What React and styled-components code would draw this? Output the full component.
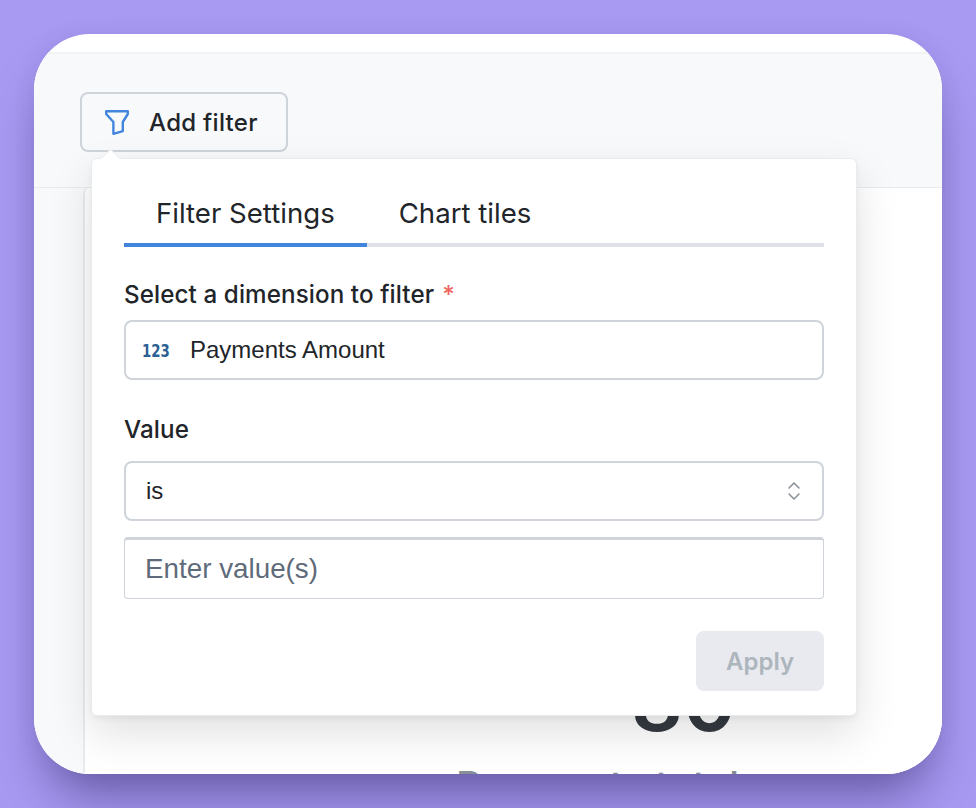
import styled, { createGlobalStyle } from 'styled-components'
import { ChevronsUpDown } from 'lucide-react'

const colors = {
  blue: '#4285dc',
  text: '#212529',
  border: '#ced4da',
  hairline: '#e9ecef',
  wash: '#f8f9fa',
  muted: '#5f6b7a',
}

const GlobalStyle = createGlobalStyle`
  html, body {
    margin: 0;
    height: 100%;
  }
  body {
    font-family: Inter, "Liberation Sans", sans-serif;
    color: ${colors.text};
  }
`

/* -------------------------------------------------------------------------- */

const Page = styled.div`
  box-sizing: border-box;
  width: 976px;
  height: 808px;
  padding: 34px;
  overflow: hidden;
  background: #a899f2;
`

const Window = styled.div`
  position: relative;
  width: 908px;
  height: 740px;
  border-radius: 56px;
  background: #fff;
  box-shadow: 0 34px 50px -14px rgba(40, 30, 90, 0.5), 0 0 24px rgba(40, 30, 90, 0.06);
`

const WindowClip = styled.div`
  display: flex;
  flex-direction: column;
  height: 100%;
  border-radius: 56px;
  overflow: hidden;
`

const Toolbar = styled.div`
  margin-top: 18px;
  height: 136px;
  flex: none;
  box-sizing: border-box;
  padding: 38px 0 0 46px;
  background: ${colors.wash};
  border-top: 2px solid #f1f3f5;
  border-bottom: 1px solid ${colors.hairline};
`

const AddFilter = styled.button`
  display: flex;
  align-items: center;
  gap: 18px;
  box-sizing: border-box;
  width: 208px;
  height: 60px;
  padding: 0 0 0 23px;
  font: 550 24px Inter, sans-serif;
  letter-spacing: 0.3px;
  color: ${colors.text};
  background: ${colors.wash};
  border: 2px solid ${colors.border};
  border-radius: 8px;
`

const Body = styled.div`
  flex: 1;
  display: flex;
  background: ${colors.wash};
`

const Tile = styled.div`
  flex: 1;
  margin-left: 49px;
  display: flex;
  flex-direction: column;
  align-items: flex-start;
  background: #fff;
  border-left: 2px solid ${colors.hairline};
  border-top-left-radius: 6px;
`

const BigNumber = styled.div`
  margin: 472px 0 0 546px;
  font: 600 81px/84px Inter, sans-serif;
  color: #343a40;
`

const TileLabel = styled.div`
  margin: 17px 0 0 371px;
  font: 500 40px/50px Inter, sans-serif;
  color: #868e96;
  white-space: nowrap;
`

/* -------------------------------------------------------------------------- */

const Popover = styled.div`
  position: absolute;
  left: 57px;
  top: 124px;
  box-sizing: border-box;
  width: 766px;
  height: 558px;
  padding: 28px 32px 24px;
  display: flex;
  flex-direction: column;
  background: #fff;
  border-radius: 6px;
  border: 1px solid ${colors.hairline};
  box-shadow: 0 3px 6px rgba(0, 0, 0, 0.05), 0 18px 44px rgba(0, 0, 0, 0.12);

  &::before {
    content: '';
    position: absolute;
    left: 10px;
    top: -9px;
    width: 16px;
    height: 16px;
    background: #fff;
    border-top: 1px solid ${colors.hairline};
    border-left: 1px solid ${colors.hairline};
    transform: rotate(45deg) scale(0.8);
  }
`

const TabList = styled.div`
  display: flex;
  height: 60px;
  flex: none;
  box-sizing: border-box;
  border-bottom: 4px solid #dee2e6;
`

const Tab = styled.div`
  box-sizing: border-box;
  height: 60px;
  padding: 0 32px 4px;
  display: flex;
  align-items: center;
  font: 400 27.6px Inter, sans-serif;
  color: ${colors.text};
  border-bottom: 4px solid ${({ $active }) => ($active ? colors.blue : 'transparent')};
`

const Label = styled.label`
  display: block;
  margin-top: ${({ $top }) => $top}px;
  font: 450 24.2px/28px Inter, sans-serif;
  letter-spacing: 0.1px;
  color: ${colors.text};
`

const Required = styled.span`
  margin-left: 8px;
  color: #f0645f;
`

const Field = styled.div`
  box-sizing: border-box;
  display: flex;
  align-items: center;
  width: 700px;
  height: 60px;
  background: #fff;
  border: 2px solid ${colors.border};
  border-radius: 8px;
  font: 400 24px "Liberation Sans", Arial, sans-serif;
  color: ${colors.text};
`

const DimensionField = styled(Field)`
  margin-top: 11px;
  padding-left: 16px;
  gap: 18px;
`

const SelectField = styled(Field)`
  margin-top: 17px;
  padding: 0 16px 0 20px;
  justify-content: space-between;
`

const ValueField = styled(Field)`
  margin-top: 16px;
  height: 62px;
  padding-left: 20px;
  border-width: 3px 1px 1px;
  border-radius: 4px;
  font-size: 27.8px;
  color: ${colors.muted};
`

const TypeBadge = styled.span`
  width: 30px;
  font: 700 18px "DejaVu Sans", sans-serif;
  transform: scaleX(0.74);
  transform-origin: left;
  white-space: nowrap;
  color: #2c5f93;
`

const Footer = styled.div`
  margin-top: auto;
  display: flex;
  justify-content: flex-end;
`

const ApplyButton = styled.button`
  width: 128px;
  height: 60px;
  border: 0;
  border-radius: 8px;
  background: #e9eaef;
  color: #adb5bd;
  font: 600 24px Inter, sans-serif;
`

const FunnelIcon = () => (
  <svg width="26" height="28" viewBox="0 0 26 28" fill="none" stroke={colors.blue} strokeWidth="2.4" strokeLinejoin="round" strokeLinecap="round">
    <path d="M1.2 3.200H22.800V6L17.800 14V23.200L8.400 25.800V14L1.200 6Z" />
  </svg>
)

export default function App() {
  return (
    <Page>
      <GlobalStyle />
      <Window>
        <WindowClip>
          <Toolbar>
            <AddFilter>
              <FunnelIcon />
              Add filter
            </AddFilter>
          </Toolbar>
          <Body>
            <Tile>
              <BigNumber>80</BigNumber>
              <TileLabel>Payments total</TileLabel>
            </Tile>
          </Body>
        </WindowClip>
        <Popover>
          <TabList>
            <Tab $active>Filter Settings</Tab>
            <Tab>Chart tiles</Tab>
          </TabList>
          <Label $top={34}>
            Select a dimension to filter<Required>*</Required>
          </Label>
          <DimensionField>
            <TypeBadge>123</TypeBadge>
            Payments Amount
          </DimensionField>
          <Label $top={36}>Value</Label>
          <SelectField>
            is
            <ChevronsUpDown size={24} color="#868e96" strokeWidth={1.5} />
          </SelectField>
          <ValueField>Enter value(s)</ValueField>
          <Footer>
            <ApplyButton>Apply</ApplyButton>
          </Footer>
        </Popover>
      </Window>
    </Page>
  )
}
